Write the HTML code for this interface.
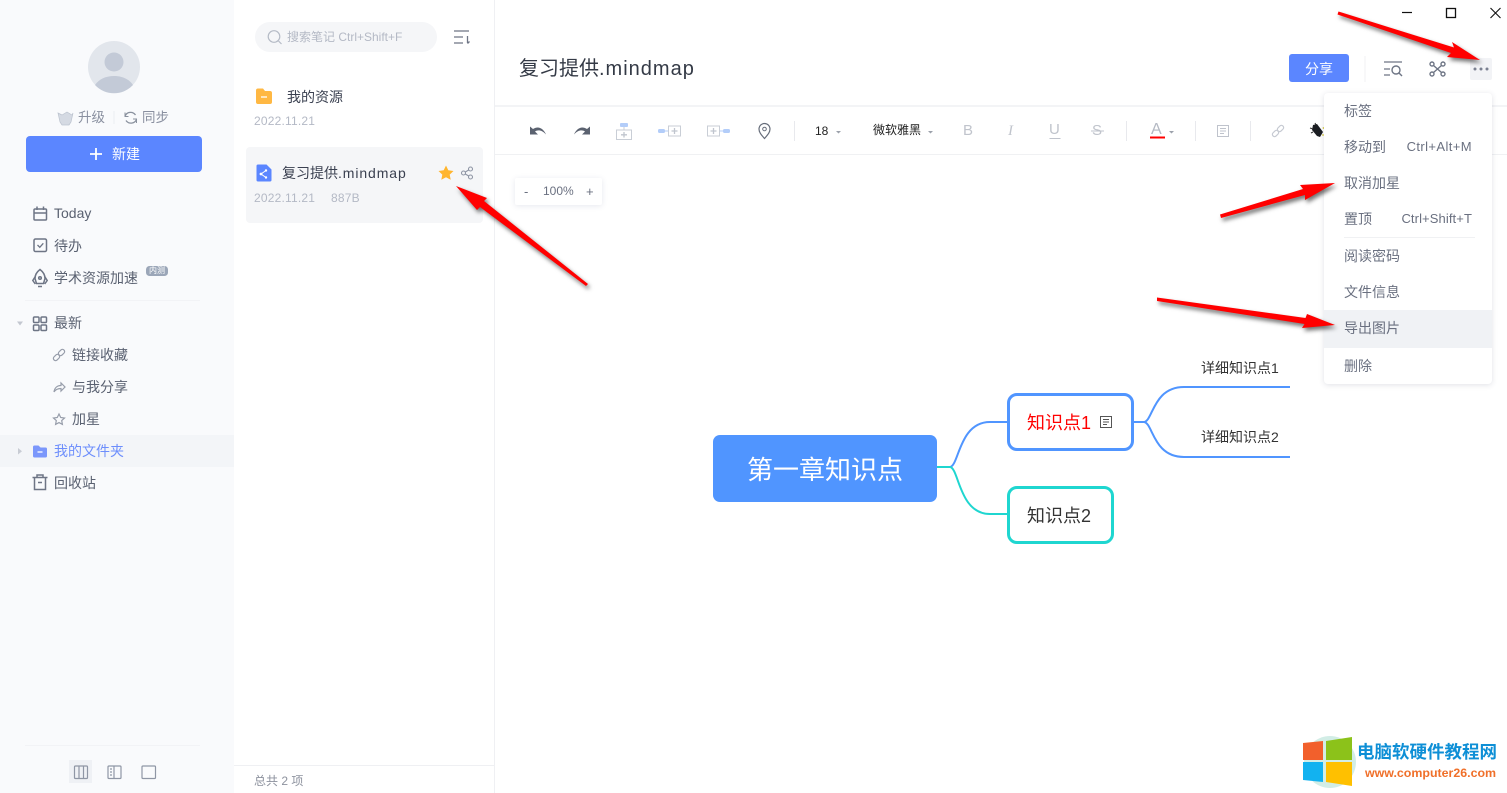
<!DOCTYPE html>
<html lang="zh"><head><meta charset="utf-8"><title>复习提供.mindmap</title>
<style>
*{box-sizing:border-box}
html,body{margin:0;padding:0;width:1507px;height:793px;overflow:hidden;background:#fff}
body{font-family:"Liberation Sans","Noto Sans CJK SC",sans-serif;position:relative;color:#5a6171}
.b,.t,svg.l{position:absolute}
.t{white-space:nowrap;height:20px;line-height:20px;font-size:14px}
svg.l{left:0;top:0}
.g{color:#b4b9c5;font-size:12px}
.d{letter-spacing:.2px}
.m{color:#6a7080;font-size:14px}
.s{color:#6a7080;font-size:13px}
</style></head><body>
<div class="b" style="left:0;top:0;width:234px;height:793px;background:#f9fafc"></div>
<div class="b" style="left:494px;top:0;width:1px;height:793px;background:#eff0f3"></div>
<div class="b" style="left:0;top:435px;width:234px;height:32px;background:#f3f5f8"></div>
<div class="b" style="left:26px;top:136px;width:176px;height:36px;background:#5b86ff;border-radius:4px"></div>
<div class="b" style="left:25px;top:300px;width:175px;height:1px;background:#f2f3f6"></div>
<div class="b" style="left:25px;top:745px;width:175px;height:1px;background:#f2f3f6"></div>
<div class="b" style="left:69px;top:760px;width:23px;height:23px;background:#eff1f5"></div>
<div class="b" style="left:255px;top:22px;width:182px;height:30px;background:#f5f6f8;border-radius:15px"></div>
<div class="b" style="left:246px;top:147px;width:237px;height:76px;background:#f5f6f8;border-radius:4px"></div>
<div class="b" style="left:234px;top:765px;width:260px;height:1px;background:#eff0f3"></div>
<div class="b" style="left:495px;top:105px;width:1012px;height:2px;background:#f3f4f6"></div>
<div class="b" style="left:495px;top:154px;width:1012px;height:1px;background:#f0f1f3"></div>
<div class="b" style="left:1289px;top:54px;width:60px;height:28px;background:#5b86ff;border-radius:3px"></div>
<div class="b" style="left:1470px;top:58px;width:22px;height:22px;background:#f2f3f6;border-radius:2px"></div>
<div class="b" style="left:515px;top:178px;width:87px;height:27px;background:#fff;box-shadow:0 1px 6px rgba(60,80,120,.13);border-radius:2px"></div>

<svg class="l" width="1507" height="793" viewBox="0 0 1507 793" fill="none">
<!-- avatar -->
<circle cx="114" cy="67" r="26" fill="#e2e6ec"/>
<circle cx="114" cy="62" r="9.500" fill="#c3cad7"/>
<path d="M95 85c4-6 11-9 19-9s15 3 19 9a26 26 0 0 1-38 0z" fill="#c3cad7"/>
<!-- crown, sync -->
<path d="M58 113l4 2 5-3 5 3 1-2-2 9-2 3h-7l-2-3z" fill="#d5dae3" stroke="#bcc3cf" stroke-width=".7"/>
<path d="M114 111v13" stroke="#eceef2"/>
<path d="M135.500 115a6 6 0 0 0-10.500 1M126 120.500a6 6 0 0 0 10.500-1" stroke="#8a919e" stroke-width="1.300"/>
<path d="M125 112.500v4h3.500M136.500 123v-4H133" stroke="#8a919e" stroke-width="1"/>
<!-- plus -->
<path d="M96 148v12M90 154h12" stroke="#fff" stroke-width="1.800"/>
<!-- sidebar icons -->
<g stroke="#6e7585" stroke-width="1.500">
<rect x="34" y="209" width="12.500" height="11" rx="1"/><path d="M34 213h12.500M37 206.500v3.500M43.500 206.500v3.500"/>
<rect x="34" y="239" width="12.500" height="12.500" rx="1.500"/><path d="M37.500 245l2.300 2.300 3.500-4" stroke-width="1.300"/>
<path d="M40 269.500c3.300 2.500 5 5.500 5 9l-1.500 5h-7l-1.500-5c0-3.500 1.700-6.500 5-9z"/><path d="M35 277l-2.200 3.500 2.500 3.500M45 277l2.200 3.500-2.500 3.500M38 286.500h4"/><circle cx="40" cy="278" r="1.300"/>
<rect x="33.500" y="317" width="5.500" height="5.500" rx="1"/><rect x="41" y="317" width="5.500" height="5.500" rx="1"/><rect x="33.500" y="325" width="5.500" height="5.500" rx="1"/><rect x="41" y="325" width="5.500" height="5.500" rx="1"/>
<path d="M32.500 477.500h15M37 477.500v-2.500h6v2.500M34.500 477.500v12h11v-12M38 482.500h4"/>
</g>
<g stroke="#979daa" stroke-width="1.200">
<rect x="-2.200" y="-3.500" width="4.400" height="7" rx="2.200" transform="translate(61.500 352.500) rotate(45)"/>
<rect x="-2.200" y="-3.500" width="4.400" height="7" rx="2.200" transform="translate(56.500 357.500) rotate(45)"/>
<path d="M54 392c.5-4 3-6.500 7-6.500V383l4 4-4 4v-2.500c-3 0-5.500 1-7 3.500z"/>
<path d="M59 414l1.700 3.500 3.800.5-2.800 2.600.7 3.800-3.400-1.800-3.400 1.800.7-3.800-2.800-2.600 3.800-.5z"/>
</g>
<path d="M17 321.500h6l-3 4z" fill="#c3c7d0"/>
<path d="M18 448v6.500l4-3.200z" fill="#c8ccd4"/>
<path d="M33 447a1.500 1.500 0 0 1 1.500-1.500h4l2 2h5a1.500 1.500 0 0 1 1.500 1.500v7a1.500 1.500 0 0 1-1.500 1.500h-11A1.500 1.500 0 0 1 33 456z" fill="#7b97fb"/>
<path d="M37.500 452h5" stroke="#fff" stroke-width="1.300"/>
<rect x="146" y="266" width="22" height="10" rx="3.500" fill="#9ba6b8"/>
<!-- bottom view icons -->
<g stroke="#8f96a5" stroke-width="1.200">
<rect x="74.500" y="766" width="13" height="12.500" rx="1"/><path d="M79 766v12.500M83.500 766v12.500"/>
<rect x="108" y="766" width="13" height="12.500" rx="1"/><path d="M114 766v12.500M110 769h2M110 772h2M110 775h2"/>
<rect x="142" y="766" width="13.500" height="12.500" rx="1"/>
</g>
<!-- list icons -->
<circle cx="274" cy="36.500" r="5.800" stroke="#b5bbc6" stroke-width="1.200"/><path d="M278.500 41l3 3" stroke="#b5bbc6" stroke-width="1.200"/>
<path d="M454 31h15M454 37h9M454 43h9M467.500 36v7M467.500 43.500l2-2" stroke="#6e7585" stroke-width="1.300"/>
<path d="M256 90.500a2 2 0 0 1 2-2h5l2 2.500h5a2 2 0 0 1 2 2v9a2 2 0 0 1-2 2h-12a2 2 0 0 1-2-2z" fill="#ffb843"/>
<path d="M261 97h6" stroke="#fff" stroke-width="1.300"/>
<path d="M256.500 166a1.500 1.500 0 0 1 1.500-1.500h8.500l5 5v10.500a1.500 1.500 0 0 1-1.500 1.500H258a1.500 1.500 0 0 1-1.500-1.500z" fill="#5b86ff"/>
<path d="M261 174l5-3.500M261 174l5 3.500" stroke="#fff" stroke-width="1"/><circle cx="261" cy="174" r="1.400" fill="#fff"/><circle cx="266" cy="170.500" r="1.200" fill="#fff"/><circle cx="266" cy="177.500" r="1.200" fill="#fff"/>
<path d="M446 165.500l2.300 4.800 5.200.7-3.800 3.600 1 5.100-4.700-2.500-4.700 2.500 1-5.100-3.800-3.600 5.200-.7z" fill="#ffb52e"/>
<g stroke="#8f96a5" stroke-width="1.100"><circle cx="470.500" cy="169" r="2"/><circle cx="470.500" cy="177" r="2"/><circle cx="463.500" cy="173" r="2"/><path d="M465.300 172l3.400-2M465.300 174l3.400 2"/></g>
<!-- window controls -->
<path d="M1402 12.500h10" stroke="#111" stroke-width="1.200"/>
<rect x="1446.500" y="8.500" width="9" height="9" stroke="#111" stroke-width="1.300"/>
<path d="M1490.500 8l10 10M1500.500 8l-10 10" stroke="#111" stroke-width="1.100"/>
<!-- header icons -->
<path d="M1365 56v26" stroke="#f0f1f3"/>
<path d="M1384 62h18M1384 69h6M1384 75h6" stroke="#6e7585" stroke-width="1.300"/>
<circle cx="1396" cy="70" r="4" stroke="#6e7585" stroke-width="1.400"/><path d="M1399 73l3 3" stroke="#6e7585" stroke-width="1.400"/>
<g stroke="#6e7585" stroke-width="1.400"><circle cx="1432" cy="64" r="2"/><circle cx="1443" cy="64" r="2"/><circle cx="1432" cy="74" r="2"/><circle cx="1443" cy="74" r="2"/><path d="M1433.500 65.500l8 7M1441.500 65.500l-8 7"/></g>
<g fill="#7a8090"><circle cx="1475" cy="69" r="1.500"/><circle cx="1481" cy="69" r="1.500"/><circle cx="1487" cy="69" r="1.500"/></g>
<!-- toolbar -->
<path d="M530 126.500v8h8l-3-3c3-2 7-1.500 11 3-2-5-7-9.500-13-5.500z" fill="#5b6270"/>
<path d="M590 126.500v8h-8l3-3c-3-2-7-1.500-11 3 2-5 7-9.500 13-5.500z" fill="#5b6270"/>
<rect x="620" y="123" width="8" height="4" rx="1" fill="#b3cdf9"/>
<path d="M624 127v3" stroke="#c9ced6"/>
<rect x="616.500" y="130" width="15" height="9.500" stroke="#c9ced6"/><path d="M624 132v5.500M621 134.800h6" stroke="#c0c5ce" stroke-width="1.300"/>
<rect x="658" y="129" width="7" height="4" rx="1.500" fill="#b3cdf9"/><path d="M665 131h3" stroke="#b3cdf9"/>
<rect x="668.500" y="126" width="12" height="10" stroke="#c9ced6"/><path d="M674.500 128v6M671.500 131h6" stroke="#c0c5ce" stroke-width="1.300"/>
<rect x="707.500" y="126" width="12" height="10" stroke="#c9ced6"/><path d="M713.500 128v6M710.500 131h6" stroke="#c0c5ce" stroke-width="1.300"/>
<path d="M720 131h3" stroke="#b3cdf9"/><rect x="723" y="129" width="7" height="4" rx="1.500" fill="#b3cdf9"/>
<path d="M764.500 138.500c-3-3.500-5.500-6-5.500-9.500a5.500 5.500 0 0 1 11 0c0 3.500-2.500 6-5.500 9.500z" stroke="#666d7a" stroke-width="1.200"/><circle cx="764.500" cy="129" r="1.800" stroke="#666d7a"/>
<path d="M794.500 121v20M1126.500 121v20M1195.500 121v20M1250.500 121v20" stroke="#e8e9ed"/>
<path d="M836 131h5l-2.500 2.500zM928 131h5l-2.500 2.500zM1169 131h5l-2.500 2.500z" fill="#9ca1ab"/>
<rect x="1217.500" y="125.500" width="11" height="11" stroke="#bfc3cc"/><path d="M1220 128.500h6M1220 131h6M1220 133.500h4" stroke="#bfc3cc"/>
<g stroke="#c6cad2" stroke-width="1.200"><rect x="-2.200" y="-3.500" width="4.400" height="7" rx="2.200" transform="translate(1280.500 128.500) rotate(45)"/><rect x="-2.200" y="-3.500" width="4.400" height="7" rx="2.200" transform="translate(1275.500 133.500) rotate(45)"/></g>
<path d="M1313 125l4-1 6 8-3 5-3-1-5-6z" fill="#1b1d22"/><path d="M1310 128l3 1M1315 123l1 2M1311 133l2-1" stroke="#333"/><circle cx="1323.500" cy="128" r=".9" fill="#d8c83a"/><circle cx="1323" cy="135" r=".9" fill="#d8c83a"/>
<path d="M1150 137.500h15" stroke="#f00" stroke-width="2"/>
<path d="M1049.500 138.500h11M1091 131h13" stroke="#bfc3cc"/>
<!-- mind map lines -->
<path d="M950 467c9-1 9-45 40-45h17" stroke="#5095ff" stroke-width="2"/>
<path d="M937 467h13" stroke="#1fd6d0" stroke-width="2"/>
<path d="M950 467c9 1 9 47 40 47h17" stroke="#1fd6d0" stroke-width="2"/>
<path d="M1134 422h10c9-1 9-35 40-35h106M1144 422c9 1 9 35 40 35h106" stroke="#5095ff" stroke-width="2"/>
</svg>

<div class="b" style="left:713px;top:435px;width:224px;height:67px;background:#5095ff;border-radius:7px"></div>
<div class="b" style="left:1007px;top:393px;width:127px;height:58px;background:#fff;border:3px solid #5095ff;border-radius:10px"></div>
<div class="b" style="left:1007px;top:486px;width:107px;height:58px;background:#fff;border:3px solid #1fd6d0;border-radius:10px"></div>
<svg class="l" width="1507" height="793" viewBox="0 0 1507 793" fill="none"><rect x="1100.500" y="416.500" width="11" height="11" stroke="#555"/><path d="M1103 419.500h6M1103 422h6M1103 424.500h4" stroke="#555"/></svg>

<div class="t g" style="left:287px;top:27px">搜索笔记 Ctrl+Shift+F</div>
<div class="t" style="left:78px;top:108px;font-size:13.500px;color:#8a90a0">升级</div>
<div class="t" style="left:142px;top:108px;font-size:13.500px;color:#8a90a0">同步</div>
<div class="t" style="left:112px;top:144px;color:#fff">新建</div>
<div class="t" style="left:54px;top:203px">Today</div>
<div class="t" style="left:54px;top:236px">待办</div>
<div class="t" style="left:54px;top:268px">学术资源加速</div>
<div class="t" style="left:149px;top:261px;font-size:8px;color:#fff">内测</div>
<div class="t" style="left:54px;top:313px">最新</div>
<div class="t" style="left:72px;top:345px">链接收藏</div>
<div class="t" style="left:72px;top:377px">与我分享</div>
<div class="t" style="left:72px;top:409px">加星</div>
<div class="t" style="left:54px;top:441px;color:#6d8efc">我的文件夹</div>
<div class="t" style="left:54px;top:473px">回收站</div>
<div class="t" style="left:287px;top:87px;color:#3a4050">我的资源</div>
<div class="t g d" style="left:254px;top:111px">2022.11.21</div>
<div class="t" style="left:282px;top:163px;color:#3a4050">复习提供<span style="letter-spacing:.9px">.mindmap</span></div>
<div class="t g d" style="left:254px;top:188px">2022.11.21</div>
<div class="t g d" style="left:331px;top:188px">887B</div>
<div class="t" style="left:254px;top:771px;font-size:12px;color:#8d929e">总共 2 项</div>
<div class="t" style="left:519px;top:59px;font-size:20px;color:#343a46">复习提供<span style="letter-spacing:1px">.mindmap</span></div>
<div class="t" style="left:1305px;top:59px;color:#fff">分享</div>
<div class="t" style="left:815px;top:121px;font-size:12px;color:#222">18</div>
<div class="t" style="left:873px;top:120px;font-size:12px;color:#222">微软雅黑</div>
<div class="t" style="left:963px;top:121px;font-size:15px;color:#c0c4cc">B</div>
<div class="t" style="left:1008px;top:121px;font-size:15px;font-style:italic;color:#c0c4cc;font-family:'Liberation Serif',serif">I</div>
<div class="t" style="left:1049px;top:120px;font-size:15px;color:#c0c4cc">U</div>
<div class="t" style="left:1092px;top:121px;font-size:15px;color:#c0c4cc">S</div>
<div class="t" style="left:1151px;top:120px;font-size:16px;color:#b4b9c3">A</div>
<div class="t" style="left:524px;top:182px;font-size:13px;color:#6a7080">-</div>
<div class="t" style="left:543px;top:181px;font-size:12px;color:#6a7080">100%</div>
<div class="t" style="left:586px;top:182px;font-size:13px;color:#6a7080">+</div>
<div class="t" style="left:747px;top:460px;font-size:26px;color:#fff">第一章知识点</div>
<div class="t" style="left:1027px;top:413px;font-size:18px;color:#f00">知识点1</div>
<div class="t" style="left:1027px;top:506px;font-size:18px;color:#333">知识点<span style="letter-spacing:1px">2</span></div>
<div class="t" style="left:1201px;top:358px;color:#333;font-size:14px">详细知识点1</div>
<div class="t" style="left:1201px;top:427px;color:#333;font-size:14px">详细知识点2</div>

<!-- menu -->
<div class="b" style="left:1324px;top:93px;width:168px;height:291px;background:#fff;border-radius:4px;box-shadow:0 1px 6px rgba(60,70,100,.16)"></div>
<div class="b" style="left:1324px;top:310px;width:168px;height:38px;background:#f0f2f5"></div>
<div class="b" style="left:1344px;top:237px;width:131px;height:1px;background:#f0f1f3"></div>
<div class="t m" style="left:1344px;top:101px">标签</div>
<div class="t m" style="left:1344px;top:137px">移动到</div>
<div class="t s" style="right:35px;top:137px;letter-spacing:.4px">Ctrl+Alt+M</div>
<div class="t m" style="left:1344px;top:173px">取消加星</div>
<div class="t m" style="left:1344px;top:209px">置顶</div>
<div class="t s" style="right:35px;top:209px;letter-spacing:.1px">Ctrl+Shift+T</div>
<div class="t m" style="left:1344px;top:246px">阅读密码</div>
<div class="t m" style="left:1344px;top:282px">文件信息</div>
<div class="t m" style="left:1344px;top:318px">导出图片</div>
<div class="t m" style="left:1344px;top:356px">删除</div>

<!-- logo -->
<svg class="l" width="1507" height="793" viewBox="0 0 1507 793">
<circle cx="1330" cy="762" r="26" fill="#bfe6dc" opacity=".7"/>
<polygon points="1303,743 1323,741 1323,760 1303,760" fill="#f2602c"/>
<polygon points="1326,741 1352,737 1352,760 1326,760" fill="#8cc21a"/>
<polygon points="1303,762 1323,762 1323,782 1303,780" fill="#12b2f0"/>
<polygon points="1326,762 1352,762 1352,786 1326,782" fill="#ffc000"/>
</svg>
<div class="t" style="left:1357px;top:742px;font-size:17.500px;font-weight:700;color:#0e8fd6">电脑软硬件教程网</div>
<div class="t" style="left:1365px;top:763px;font-size:12.400px;font-weight:700;color:#f0702a">www.computer26.com</div>

<!-- arrows -->
<svg class="l" width="1507" height="793" viewBox="0 0 1507 793" style="filter:drop-shadow(2px 3px 2px rgba(0,0,0,.55))">
<polygon fill="#f00" points="1338.500,11.500 1454,47.500 1452,42 1480,60 1447,57 1451,53 1337.500,14.500"/>
<polygon fill="#f00" points="588,284 484,201 487,198 456,186 477,210 480,207 586,286"/>
<polygon fill="#f00" points="1220,214.500 1303,189 1300,185 1335,183 1305,200 1305,195 1221,218"/>
<polygon fill="#f00" points="1157,297.500 1305.500,318 1307,314 1335,325 1302,328 1304.500,324 1157,301"/>
</svg>
</body></html>
